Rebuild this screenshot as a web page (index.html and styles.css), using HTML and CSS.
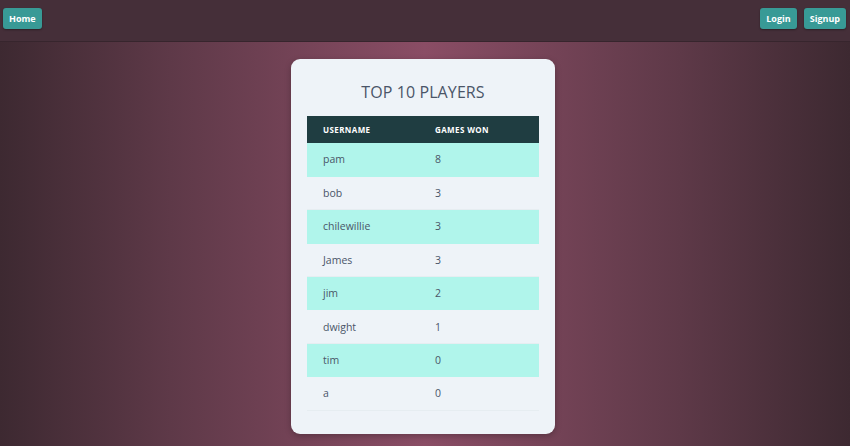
FILE: index.html
```html
<!DOCTYPE html>
<html>
<head>
<meta charset="utf-8">
<link rel="stylesheet" href="styles.css">
</head>
<body>
<nav class="navbar">
  <a class="btn">Home</a>
  <div class="nav-right">
    <a class="btn">Login</a>
    <a class="btn">Signup</a>
  </div>
</nav>
<main class="content">
  <section class="card">
    <h1 class="title">TOP 10 PLAYERS</h1>
    <table class="board">
      <thead>
        <tr><th class="col-user">USERNAME</th><th>GAMES WON</th></tr>
      </thead>
      <tbody>
        <tr><td>pam</td><td>8</td></tr>
        <tr><td>bob</td><td>3</td></tr>
        <tr><td>chilewillie</td><td>3</td></tr>
        <tr><td>James</td><td>3</td></tr>
        <tr><td>jim</td><td>2</td></tr>
        <tr><td>dwight</td><td>1</td></tr>
        <tr><td>tim</td><td>0</td></tr>
        <tr><td>a</td><td>0</td></tr>
      </tbody>
    </table>
  </section>
</main>
</body>
</html>
```
FILE: styles.css
```css
* { box-sizing: border-box; }
html, body { margin: 0; height: 100%; }
body {
  font-family: "Open Sans", "Noto Sans", sans-serif;
  background: linear-gradient(to right, #3d2931 0%, #5e3948 20%, #8a4d65 50%, #5e3948 80%, #3d2931 100%);
  overflow: hidden;
}
.navbar {
  height: 42px;
  background: #452f39;
  border-bottom: 1px solid #37252d;
  display: flex;
  justify-content: space-between;
  align-items: flex-start;
  padding: 8px 4px 0 3px;
}
.nav-right { display: flex; gap: 7px; }
.btn {
  display: inline-block;
  background: #389a96;
  color: #fff;
  font-size: 9px;
  font-weight: 700;
  height: 21px;
  line-height: 21px;
  padding: 0 6px;
  border-radius: 3px;
  box-shadow: 0 1px 2px rgba(0,0,0,0.35);
}
.content {
  display: flex;
  justify-content: center;
  padding: 17px 4px 0 0;
}
.card {
  width: 264px;
  height: 375px;
  background: #eef3f8;
  border-radius: 9px;
  padding: 0 16px;
  box-shadow: 0 2px 6px rgba(0,0,0,0.25);
}
.title {
  margin: 0;
  padding-top: 22px;
  height: 57px;
  text-align: center;
  font-size: 16px;
  font-weight: 500;
  color: #4a5568;
  letter-spacing: 0.1px;
}
.board {
  width: 232px;
  border-collapse: collapse;
}
.board th {
  background: #1f3d41;
  color: #fff;
  font-size: 8px;
  font-weight: 700;
  text-align: left;
  height: 27px;
  padding: 0 0 0 16px;
  letter-spacing: 0.4px;
}
.board .col-user { width: 112px; }
.board td {
  height: 33.4px;
  padding: 0 0 0 16px;
  font-size: 10.5px;
  color: #4a5568;
  border-bottom: 1px solid #e6edf1;
}
.board tbody tr:nth-child(odd) td { background: #b0f5eb; border-bottom-color: #b0f5eb; }
```
